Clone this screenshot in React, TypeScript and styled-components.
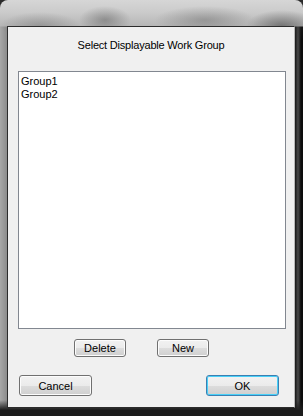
import * as React from "react";
import styled, { createGlobalStyle } from "styled-components";

const Global = createGlobalStyle`
    html, body {
        margin: 0;
        padding: 0;
        background: #2a2a2a;
    }
    * {
        box-sizing: border-box;
    }
`;

// aero glass frame around the dialog
const Frame = styled.div`
    width: 303px;
    height: 416px;
    padding: 26px 8px 8px 7px;
    border-radius: 8px 8px 0 0;
    display: flex;
    background:
        radial-gradient(ellipse 26px 14px at 105px 20px, rgba(80, 80, 80, 0.45), transparent),
        radial-gradient(ellipse 40px 14px at 40px 26px, rgba(90, 90, 90, 0.35), transparent),
        radial-gradient(ellipse 50px 14px at 205px 20px, rgba(90, 90, 90, 0.4), transparent),
        radial-gradient(ellipse 36px 16px at 282px 26px, rgba(50, 50, 50, 0.5), transparent),
        linear-gradient(to bottom, #d6d6d6 0px, #cbcbcb 12px, #b6b6b6 26px, transparent 27px),
        linear-gradient(to bottom, transparent 400px, #1c1c1c 410px),
        linear-gradient(to right, #a8a8a8 0px, #8c8c8c 7px, #3a3a3a 280px, #151515 295px, #4a4a4a 298px, #0c0c0c 301px);
`;

const Client = styled.div`
    flex: 1;
    display: flex;
    flex-direction: column;
    padding: 0 8px 0 10px;
    background: #f0f0f0;
    border: 1px solid #2c2c2c;
    border-right-color: #b8b8b8;
    font-family: "Liberation Sans", Arial, sans-serif;
    font-size: 11px;
    color: #000;
`;

const Title = styled.div`
    margin-top: 11px;
    height: 14px;
    line-height: 14px;
    text-align: center;
    letter-spacing: -0.2px;
    padding-right: 2px;
`;

const ListBox = styled.div`
    margin-top: 19px;
    height: 258px;
    background: #fff;
    border: 1px solid #828790;
    padding: 3px 2px;
    display: flex;
    flex-direction: column;
`;

const ListItem = styled.div`
    height: 13px;
    line-height: 13px;
`;

const Row = styled.div<{ $top: number }>`
    display: flex;
    align-items: center;
    margin-top: ${(p) => p.$top}px;
`;

const Button = styled.button<{
    $w: number;
    $h: number;
    $ml?: number;
    $mr?: number;
    $default?: boolean;
}>`
    width: ${(p) => p.$w}px;
    height: ${(p) => p.$h}px;
    margin-left: ${(p) => p.$ml ?? 0}px;
    margin-right: ${(p) => p.$mr ?? 0}px;
    padding: 0;
    font-family: inherit;
    font-size: 11px;
    color: #000;
    border-radius: 3px;
    border: 1px solid ${(p) => (p.$default ? "#3c7fb1" : "#707070")};
    background: linear-gradient(to bottom, #f2f2f2 0%, #ebebeb 50%, #dddddd 51%, #cfcfcf 100%);
    box-shadow: inset 0 0 0 1px ${(p) => (p.$default ? "#48d0f8" : "#fcfcfc")};
`;

const Spacer = styled.div`
    flex: 1;
`;

export default function App() {
    return (
        <>
            <Global />
            <Frame>
                <Client>
                    <Title>Select Displayable Work Group</Title>
                    <ListBox>
                        <ListItem>Group1</ListItem>
                        <ListItem>Group2</ListItem>
                    </ListBox>
                    <Row $top={10}>
                        <Button $w={52} $h={18} $ml={56}>
                            Delete
                        </Button>
                        <Button $w={52} $h={18} $ml={31}>
                            New
                        </Button>
                    </Row>
                    <Row $top={18}>
                        <Button $w={73} $h={21} $ml={1}>
                            Cancel
                        </Button>
                        <Spacer />
                        <Button $w={73} $h={21} $mr={7} $default>
                            OK
                        </Button>
                    </Row>
                </Client>
            </Frame>
        </>
    );
}
